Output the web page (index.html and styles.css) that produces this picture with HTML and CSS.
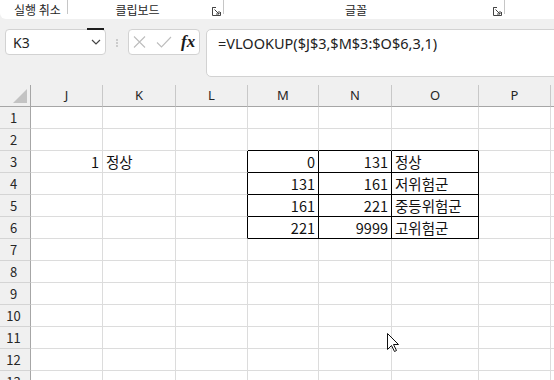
FILE: index.html
```html
<!DOCTYPE html>
<html>
<head lang="ko">
    <meta charset="UTF-8">
    <title>VLOOKUP</title>
    <link rel="stylesheet" href="styles.css">
</head>
<body>
    <div class="ribbon">
        <div class="grp g-undo"><span class="glabel">실행 취소</span><i class="sep"></i></div>
        <div class="grp g-clip">
            <span class="glabel">클립보드</span>
            <span class="launch"><svg width="9" height="9" viewBox="0 0 9 9"><path d="M0.5 4V0.5H4M0.5 0.5V8.5H8.5V5M2.5 2.5L7 7M7 4V7H4" fill="none" stroke="#444" stroke-width="1"/></svg></span>
            <i class="sep"></i>
        </div>
        <div class="grp g-font">
            <span class="glabel">글꼴</span>
            <span class="launch"><svg width="9" height="9" viewBox="0 0 9 9"><path d="M0.5 4V0.5H4M0.5 0.5V8.5H8.5V5M2.5 2.5L7 7M7 4V7H4" fill="none" stroke="#444" stroke-width="1"/></svg></span>
            <i class="sep"></i>
        </div>
        <div class="grp g-rest"></div>
    </div>

    <div class="fbar">
        <div class="namebox">
            <span class="nb-text">K3</span>
            <span class="nb-drop"><svg width="10" height="6" viewBox="0 0 10 6"><path d="M1 1L5 5L9 1" fill="none" stroke="#444" stroke-width="1.2"/></svg></span>
        </div>
        <div class="dots"><svg width="3" height="12" viewBox="0 0 3 12"><circle cx="1.5" cy="1.5" r="1" fill="#8a8a8a"/><circle cx="1.5" cy="6" r="1" fill="#8a8a8a"/><circle cx="1.5" cy="10.5" r="1" fill="#8a8a8a"/></svg></div>
        <div class="fnbox">
            <svg class="ic-x" width="13" height="12" viewBox="0 0 13 12"><path d="M1 0.5L12 11.5M12 0.5L1 11.5" stroke="#bdbdbd" stroke-width="1.1"/></svg>
            <svg class="ic-ok" width="16" height="12" viewBox="0 0 16 12"><path d="M1 6.5L5.5 11L15 1" fill="none" stroke="#bdbdbd" stroke-width="1.1"/></svg>
            <span class="fx">fx</span>
        </div>
        <div class="formula">=VLOOKUP($J$3,$M$3:$O$6,3,1)</div>
    </div>

    <div class="sheet">
        <div class="corner"><i class="tri"></i></div>
        <div class="h">J</div><div class="h">K</div><div class="h">L</div><div class="h">M</div><div class="h">N</div><div class="h">O</div><div class="h">P</div><div class="h"></div>

        <div class="rh">1</div><div class="c"></div><div class="c"></div><div class="c"></div><div class="c"></div><div class="c"></div><div class="c"></div><div class="c"></div><div class="c"></div>
        <div class="rh">2</div><div class="c"></div><div class="c"></div><div class="c"></div><div class="c bb"></div><div class="c bb"></div><div class="c bb"></div><div class="c"></div><div class="c"></div>
        <div class="rh">3</div><div class="c num">1</div><div class="c">정상</div><div class="c br"></div><div class="c bx num">0</div><div class="c bx num">131</div><div class="c bx">정상</div><div class="c"></div><div class="c"></div>
        <div class="rh">4</div><div class="c"></div><div class="c"></div><div class="c br"></div><div class="c bx num">131</div><div class="c bx num">161</div><div class="c bx">저위험군</div><div class="c"></div><div class="c"></div>
        <div class="rh">5</div><div class="c"></div><div class="c"></div><div class="c br"></div><div class="c bx num">161</div><div class="c bx num">221</div><div class="c bx">중등위험군</div><div class="c"></div><div class="c"></div>
        <div class="rh">6</div><div class="c"></div><div class="c"></div><div class="c br"></div><div class="c bx num">221</div><div class="c bx num">9999</div><div class="c bx">고위험군</div><div class="c"></div><div class="c"></div>
        <div class="rh">7</div><div class="c"></div><div class="c"></div><div class="c"></div><div class="c"></div><div class="c"></div><div class="c"></div><div class="c"></div><div class="c"></div>
        <div class="rh">8</div><div class="c"></div><div class="c"></div><div class="c"></div><div class="c"></div><div class="c"></div><div class="c"></div><div class="c"></div><div class="c"></div>
        <div class="rh">9</div><div class="c"></div><div class="c"></div><div class="c"></div><div class="c"></div><div class="c"></div><div class="c"></div><div class="c"></div><div class="c"></div>
        <div class="rh">10</div><div class="c"></div><div class="c"></div><div class="c"></div><div class="c"></div><div class="c"></div><div class="c"></div><div class="c"></div><div class="c"></div>
        <div class="rh">11</div><div class="c"></div><div class="c"></div><div class="c"></div><div class="c"></div><div class="c"></div><div class="c"></div><div class="c"></div><div class="c"></div>
        <div class="rh">12</div><div class="c"></div><div class="c"></div><div class="c"></div><div class="c"></div><div class="c"></div><div class="c"></div><div class="c"></div><div class="c"></div>
        <div class="rh">13</div><div class="c"></div><div class="c"></div><div class="c"></div><div class="c"></div><div class="c"></div><div class="c"></div><div class="c"></div><div class="c"></div>
    </div>

    <svg class="cursor" width="13" height="20" viewBox="0 0 13 20"><path d="M0.5 0.5V16.5L4.5 12.5L7.5 18.5L9.5 17.5L6.5 11.5H11.5Z" fill="#fff" stroke="#111" stroke-width="1" stroke-linejoin="miter"/></svg>
</body>
</html>
```

FILE: styles.css
```css
*{
    box-sizing: border-box;
}
body{
    margin: 0;
    width: 554px;
    height: 380px;
    overflow: hidden;
    position: relative;
    background: #f0f0f0;
    font-family: "Noto Sans", "Noto Sans CJK KR", sans-serif;
    color: #222;
}

/* ribbon group labels */
.ribbon{
    display: flex;
    height: 19px;
    background: #fff;
    border-bottom-left-radius: 6px;
}
.grp{
    display: flex;
    height: 19px;
}
.g-undo{
    width: 68px;
    padding-left: 8px;
}
.g-clip{
    width: 156px;
}
.g-font{
    width: 281px;
}
.g-rest{
    flex: 1;
}
.glabel{
    flex: 1;
    text-align: center;
    font-family: "Noto Sans CJK KR", sans-serif;
    font-size: 12px;
    line-height: 20px;
    color: #262626;
}
.launch{
    width: 16px;
    display: flex;
    align-items: center;
    justify-content: flex-end;
    padding-right: 2px;
    padding-top: 3px;
}
.sep{
    width: 1px;
    height: 14px;
    background: #c6c6c6;
}

/* name box + formula bar */
.fbar{
    display: flex;
    align-items: flex-start;
    margin-top: 10px;
    padding-left: 5px;
    height: 48px;
}
.namebox{
    width: 101px;
    height: 26px;
    border: 1px solid #d2d2d2;
    border-radius: 4px;
    background: #fff;
    display: flex;
    align-items: center;
}
.nb-text{
    flex: 1;
    padding-left: 7px;
    font-size: 14px;
    color: #222;
}
.nb-drop{
    width: 17px;
    align-self: stretch;
    margin-top: -2px;
    margin-right: 1px;
    border-top: 2px solid #1e1e1e;
    display: flex;
    align-items: center;
    justify-content: center;
}
.dots{
    width: 2px;
    margin: 8px 10px 0 10px;
    display: flex;
    justify-content: center;
}
.fnbox{
    width: 72px;
    height: 26px;
    border: 1px solid #d2d2d2;
    border-radius: 4px;
    background: #fff;
    display: flex;
    align-items: center;
    padding-left: 4px;
}
.ic-ok{
    margin-left: 10px;
}
.fx{
    margin-left: 9px;
    font-family: "Liberation Serif", serif;
    font-style: italic;
    font-weight: bold;
    font-size: 17px;
    line-height: 20px;
    color: #1a1a1a;
}
.formula{
    flex: 1;
    height: 48px;
    margin-left: 6px;
    margin-right: -20px;
    border: 1px solid #d2d2d2;
    border-radius: 5px;
    background: #fff;
    padding: 3px 11px;
    font-size: 14.5px;
    line-height: 20px;
    color: #222;
}

/* sheet grid */
.sheet{
    display: grid;
    grid-template-columns: 31px 72px 73px 72px 71px 73px 87px 72px 30px;
    grid-auto-rows: 22px;
    margin-top: 8px;
}
.corner{
    background: #f0f0f0;
    border-right: 1px solid #a6a6a6;
    border-bottom: 1px solid #a6a6a6;
    display: flex;
    align-items: flex-end;
    justify-content: flex-end;
    padding: 0 3px 3px 0;
}
.tri{
    width: 0;
    height: 0;
    border-left: 14px solid transparent;
    border-bottom: 14px solid #c3c3c3;
}
.h{
    background: #f0f0f0;
    border-right: 1px solid #c8c8c8;
    border-bottom: 1px solid #a6a6a6;
    text-align: center;
    font-size: 13px;
    line-height: 21px;
    color: #262626;
}
.rh{
    background: #f0f0f0;
    border-right: 1px solid #a6a6a6;
    border-bottom: 1px solid #d4d4d4;
    text-align: center;
    padding-right: 3px;
    font-family: "Noto Sans CJK KR", sans-serif;
    font-size: 13px;
    line-height: 21px;
    color: #262626;
}
.c{
    background: #fff;
    border-right: 1px solid #dcdcdc;
    border-bottom: 1px solid #dcdcdc;
    padding: 0 3px;
    font-family: "Noto Sans CJK KR", sans-serif;
    font-size: 14.5px;
    line-height: 21px;
    color: #111;
    white-space: nowrap;
}
.num{
    text-align: right;
}
.bx{
    border-right-color: #000;
    border-bottom-color: #000;
}
.bb{
    border-bottom-color: #000;
}
.br{
    border-right-color: #000;
}

.cursor{
    position: absolute;
    left: 387px;
    top: 333px;
}
```
